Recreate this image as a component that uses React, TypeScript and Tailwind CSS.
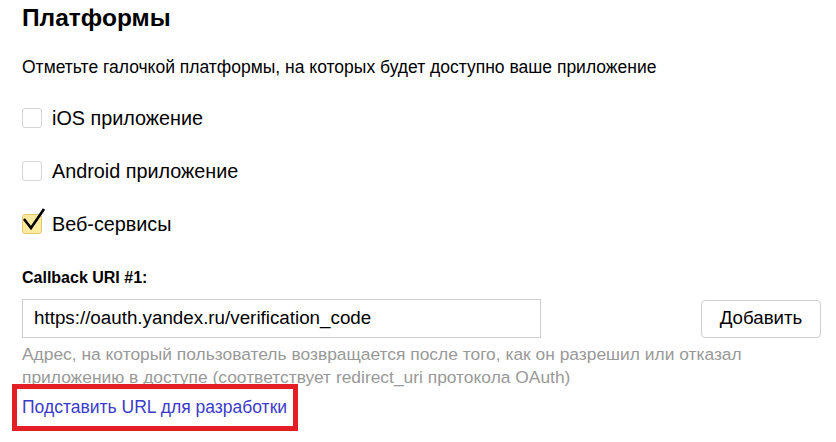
import React from "react";

interface CheckRowProps {
  label: string;
  checked?: boolean;
}

function CheckRow({ label, checked = false }: CheckRowProps) {
  return (
    <label className="flex items-center h-5">
      <span
        className={
          checked
            ? "relative w-5 h-5 rounded-[3px] border border-[#e2c96f] bg-[#ffeba0]"
            : "relative w-5 h-5 rounded-[3px] border border-[#d4d4d4] bg-white"
        }
      >
        {checked && (
          <svg
            className="absolute left-[-1px] top-[-8px] overflow-visible"
            width="24"
            height="24"
            viewBox="0 0 24 24"
          >
            <path
              d="M2 12 L9 21 L22 2"
              fill="none"
              stroke="#000"
              strokeWidth="2.6"
              strokeLinecap="butt"
              strokeLinejoin="miter"
            />
          </svg>
        )}
      </span>
      <span className="ml-[10px] text-[19.8px] leading-5 text-black">{label}</span>
    </label>
  );
}

export default function App() {
  return (
    <div className="w-[836px] h-[442px] bg-white pl-[22px] pt-1 font-['Liberation_Sans',Arial,sans-serif] overflow-hidden">
      <h1 className="text-[24.5px] leading-7 font-bold text-black">Платформы</h1>

      <p className="mt-[25px] text-[17.5px] leading-5 text-black">
        Отметьте галочкой платформы, на которых будет доступно ваше приложение
      </p>

      <div className="mt-[31px] flex flex-col gap-[33px]">
        <CheckRow label="iOS приложение" />
        <CheckRow label="Android приложение" />
        <CheckRow label="Веб-сервисы" checked />
      </div>

      <div className="mt-[34px] text-[16px] leading-5 font-bold text-black">
        Callback URI #1:
      </div>

      <div className="mt-[11px] flex items-center w-[799px]">
        <div className="w-[519px] h-[39px] border border-[#cfcfcf] flex items-center pl-[11px] text-[18.8px] text-black">
          https://oauth.yandex.ru/verification_code
        </div>
        <button className="ml-auto w-[120px] h-[38px] rounded-[4px] border border-[#d0d0d0] bg-white text-[18.7px] text-black">
          Добавить
        </button>
      </div>

      <p className="mt-[5px] w-[799px] text-[17.4px] leading-[23px] text-[#999999]">
        Адрес, на который пользователь возвращается после того, как он разрешил или отказал
        приложению в доступе (соответствует redirect_uri протокола OAuth)
      </p>

      <div className="relative mt-2 w-fit">
        <a className="block text-[17.5px] leading-5 text-[#3b3bc9] cursor-pointer">
          Подставить URL для разработки
        </a>
        <div className="absolute left-[-10px] top-[-13px] w-[286px] h-[47px] border-[5px] border-[#e31e24]" />
      </div>
    </div>
  );
}
